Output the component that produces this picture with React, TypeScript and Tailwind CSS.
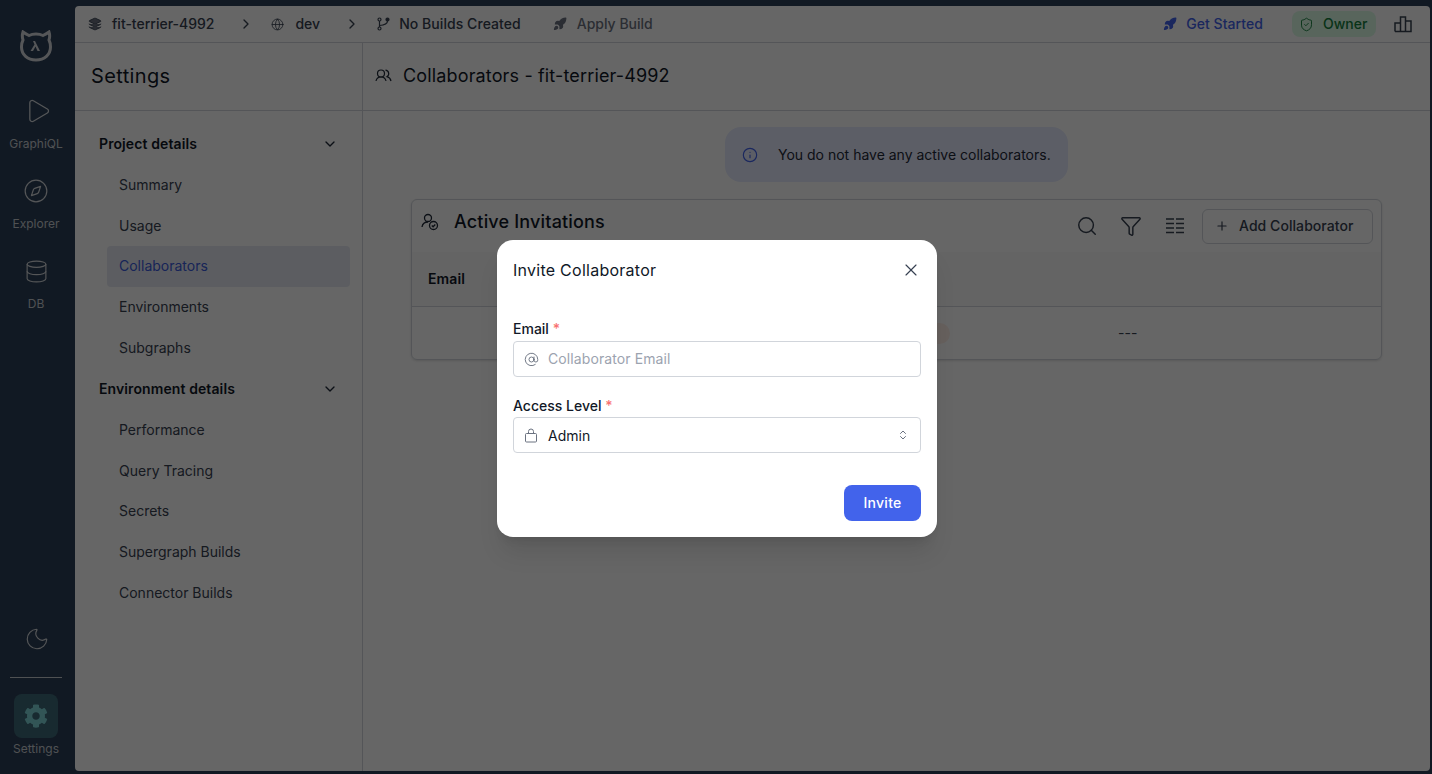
import { AtSign, ChevronDown, ChevronRight, ChevronsUpDown, Compass, Database, Filter, Globe, Info, Layers, Moon, Play, Plus, Rocket, Search, ShieldCheck, X } from "lucide-react";
import { FaCog } from "react-icons/fa";

const projectLinks = ["Summary", "Usage", "Collaborators", "Environments", "Subgraphs"];
const environmentLinks = ["Performance", "Query Tracing", "Secrets", "Supergraph Builds", "Connector Builds"];

const RailItem = ({ label, children }: { label: string; children: React.ReactNode }) => (
  <div className="flex h-[80px] flex-col items-center pt-[3px]">
    <div className="flex h-[34px] items-center justify-center text-[#d4d8dc]">{children}</div>
    <span className="mt-[8px] text-xs leading-4 text-[#c6cad0]">{label}</span>
  </div>
);

const Logo = () => (
  <svg width="32" height="32" viewBox="0 0 32 32" fill="none">
    <path d="M3 2c-1 3-1 5 0 8-1 2-1.500 4-1.500 7 0 7.500 6 13 14.500 13s14.500-5.500 14.500-13c0-3-.5-5-1.500-7 1-3 1-5 0-8-2 1.500-4 2.500-6 3.500-2-1-4-1.500-7-1.500s-5 .5-7 1.500C7 4.500 5 3.500 3 2z" stroke="#d4d8dc" strokeWidth="3" />
    <path d="M13 11h2l5 10h-2.500l-2-4.500L13 21h-2.500l4-6.500z" fill="#d4d8dc" />
  </svg>
);

const PeopleIcon = () => (
  <svg width="17" height="17" viewBox="0 0 17 17" fill="none" stroke="currentColor" strokeWidth="1.200" className="text-[#1f2937]">
    <circle cx="6" cy="6.500" r="3.500" />
    <path d="M1 14c.5-2.500 2-4 5-4s4.500 1.500 5 4M10.500 3.200a3.500 3.500 0 0 1 1.500 6.500c2 .5 3.500 2 4 4.300" />
  </svg>
);

const InviteIcon = () => (
  <svg width="18" height="18" viewBox="0 0 18 18" fill="none" stroke="currentColor" strokeWidth="1.300" className="mt-[13px] text-[#1f2937]">
    <circle cx="7" cy="5" r="3.500" />
    <path d="M1 14c.5-3 2.500-5 6-5" />
    <circle cx="12.500" cy="12.500" r="4" />
    <path d="M10.800 12.500l1.300 1.300 2.200-2.300" />
  </svg>
);

const BranchIcon = () => (
  <svg width="13" height="14" viewBox="0 0 13 14" fill="none" stroke="#374151" strokeWidth="1.200" className="ml-[17px]">
    <circle cx="2.500" cy="2.500" r="1.500" />
    <circle cx="2.500" cy="11.500" r="1.500" />
    <circle cx="10.500" cy="2.500" r="1.500" fill="#374151" />
    <path d="M2.500 4v6M10.500 4c0 3-3 4-8 4.500" />
  </svg>
);

const BagLock = () => (
  <svg width="14" height="15" viewBox="0 0 14 15" fill="none" stroke="#6b7280" strokeWidth="1">
    <rect x="1.500" y="5.500" width="11" height="8.500" rx="1" />
    <path d="M4.500 5.500V3.500a2.500 2.500 0 0 1 5 0v2" />
  </svg>
);

const NavGroup = ({ title, links }: { title: string; links: string[] }) => (
  <div>
    <div className="flex h-[40.75px] items-center justify-between pl-[24px] pr-[24px]">
      <span className="text-sm font-semibold tracking-[0.1px] text-[#111827]">{title}</span>
      <ChevronDown size={16} className="text-[#1f2937]" />
    </div>
    {links.map((link) => (
      <div
        key={link}
        className={`ml-[32px] mr-[12px] flex h-[40.75px] items-center rounded pl-[12px] text-sm ${
          link === "Collaborators" ? "bg-[#e6e9f2] text-[#3b5bdb]" : "text-[#374151]"
        }`}
      >
        {link}
      </div>
    ))}
  </div>
);

const Field = ({ label, labelGap, children }: { label: string; labelGap: string; children: React.ReactNode }) => (
  <div>
    <div className={`${labelGap} text-sm font-medium leading-5 text-[#111827]`}>
      {label} <span className="text-[#f87171]">*</span>
    </div>
    <div className="flex h-[36px] items-center rounded border border-[#d1d5db] bg-white pl-[10px] pr-[11px] text-sm">
      {children}
    </div>
  </div>
);

export default function App() {
  return (
    <div className="relative flex h-[774px] w-[1432px] overflow-hidden bg-[#2c3f57] font-['Inter',sans-serif]">
      {/* left rail */}
      <aside className="flex w-[75px] flex-col items-center pr-[3px] pt-[30px]">
        <div className="mb-[29px] flex h-[32px] items-center justify-center">
          <Logo />
        </div>
        <div className="w-full">
          <RailItem label="GraphiQL">
            <Play size={28} strokeWidth={1.1} className="ml-[3px]" />
          </RailItem>
          <RailItem label="Explorer">
            <Compass size={26} strokeWidth={1.1} />
          </RailItem>
          <RailItem label="DB">
            <Database size={25} strokeWidth={1.1} />
          </RailItem>
        </div>
        <div className="mt-auto flex w-full flex-col items-center pb-[17px]">
          <Moon size={26} strokeWidth={1.1} className="ml-[2px] text-[#d4d8dc]" />
          <div className="mb-[16px] mt-[25px] h-px w-[52px] bg-[#c6cad0]" />
          <div className="flex h-[44px] w-[44px] items-center justify-center rounded-lg bg-[#3e6a78]">
            <FaCog size={24} className="text-[#7dd4d8]" />
          </div>
          <span className="mt-[3px] text-xs leading-4 text-[#c6cad0]">Settings</span>
        </div>
      </aside>

      {/* main panel */}
      <div className="mb-[3px] mr-[2px] mt-[6px] flex min-w-0 flex-1 flex-col rounded-sm bg-white">
        <header className="flex h-[37px] items-center border-b border-[#d1d5db] pl-[13px] pr-[18px] text-sm text-[#374151]">
          <Layers size={14} strokeWidth={1.5} className="fill-[#6b7280]" />
          <span className="ml-[10px] font-medium">fit-terrier-4992</span>
          <ChevronRight size={16} className="ml-[24px]" />
          <Globe size={13} strokeWidth={1.5} className="ml-[17px]" />
          <span className="ml-[11px] font-medium">dev</span>
          <ChevronRight size={16} className="ml-[24px]" />
          <BranchIcon />
          <span className="ml-[9px] font-medium tracking-[0.06px]">No Builds Created</span>
          <Rocket size={14} className="ml-[32px] fill-[#6b7280] text-[#6b7280]" />
          <span className="ml-[10px] font-medium text-[#6b7280]">Apply Build</span>
          <Rocket size={14} className="ml-auto fill-[#4263eb] text-[#4263eb]" />
          <span className="ml-[9px] font-medium tracking-[0.06px] text-[#4263eb]">Get Started</span>
          <div className="ml-[29px] flex h-[26px] w-[84px] items-center rounded-lg bg-[#dcfce7] pl-[7px] text-[#15803d]">
            <ShieldCheck size={15} strokeWidth={1.5} />
            <span className="ml-[9px] font-medium">Owner</span>
          </div>
          <svg className="ml-[18px] text-[#374151]" width="18" height="18" viewBox="0 0 18 18" fill="none" stroke="currentColor" strokeWidth="1.500">
            <path d="M1 16.500V8h5.500v8.500M6.500 16.500V2h5v14.500M11.500 16.500V6H17v10.500zM1 16.500h16" />
          </svg>
        </header>

        <div className="flex min-h-0 flex-1">
          {/* settings nav */}
          <nav className="w-[288px] shrink-0 border-r border-[#d1d5db]">
            <div className="flex h-[68px] items-center border-b border-[#d1d5db] pb-[2px] pl-[16px] text-xl tracking-[0.37px] text-[#111827]">Settings</div>
            <div className="pt-[12.700px]">
              <NavGroup title="Project details" links={projectLinks} />
              <div className="mt-[0.500px]">
                <NavGroup title="Environment details" links={environmentLinks} />
              </div>
            </div>
          </nav>

          {/* content */}
          <main className="min-w-0 flex-1">
            <div className="flex h-[68px] items-center border-b border-[#d1d5db] pb-[2px] pl-[12px] text-lg tracking-[0.15px] text-[#111827]">
              <PeopleIcon />
              <span className="ml-[11px]">Collaborators - fit-terrier-4992</span>
            </div>
            <div className="px-[48px] pt-[16px]">
              <div className="mx-auto flex h-[55px] w-[343px] items-center rounded-2xl bg-[#e6ebff] pl-[17px] text-sm text-[#1f2937]">
                <Info size={16} strokeWidth={1.75} className="text-[#4263eb]" />
                <span className="ml-[20px]">You do not have any active collaborators.</span>
              </div>
              <section className="mt-[17px] overflow-hidden rounded-md border border-[#d1d5db] shadow">
                <div className="flex h-[52px] items-start pl-[9px] pr-[8px]">
                  <InviteIcon />
                  <span className="ml-[15px] mt-[8px] text-lg font-medium tracking-[0.17px] text-[#111827]">Active Invitations</span>
                  <div className="ml-auto mt-[9px] flex items-center text-[#374151]">
                    <Search size={22} strokeWidth={1.6} className="-mt-[2px]" />
                    <Filter size={22} strokeWidth={1.6} className="-mt-[2px] ml-[22px]" />
                    <svg className="-mt-[2px] ml-[22px]" width="22" height="22" viewBox="0 0 22 22" fill="none" stroke="currentColor" strokeWidth="1.600">
                      <path d="M2 4h8M12 4h8M2 8.500h8M12 8.500h8M2 13h8M12 13h8M2 17.500h8M12 17.500h8" />
                    </svg>
                    <div className="ml-[16px] flex h-[35px] w-[171px] items-center rounded-md border border-[#d1d5db] pb-[1px] pl-[12px] text-sm font-medium tracking-[0.06px] text-[#374151]">
                      <Plus size={14} />
                      <span className="ml-[10px]">Add Collaborator</span>
                    </div>
                  </div>
                </div>
                <div className="flex h-[55px] items-center border-b border-[#d1d5db] bg-[#f9fafb] pl-[16px] text-sm font-semibold tracking-[0.1px] text-[#111827]">Email</div>
                <div className="flex h-[52px] items-center pl-[500px] text-sm text-[#374151]">
                  <span className="h-[21px] w-[38px] rounded-full bg-[#fff0e8]" />
                  <span className="ml-[168px]">---</span>
                </div>
              </section>
            </div>
          </main>
        </div>
      </div>

      {/* invite dialog */}
      <div className="absolute inset-0 flex items-center justify-center bg-black/60">
        <div className="ml-[2px] mt-[3px] h-[297px] w-[440px] rounded-2xl bg-white px-[16px] pt-[20px] shadow-xl">
          <div className="flex h-[20px] items-center justify-between text-base tracking-[0.26px] text-[#111827]">
            <span>Invite Collaborator</span>
            <X size={20} strokeWidth={1.4} className="text-[#374151]" />
          </div>
          <div className="mt-[39px] flex flex-col gap-[19px]">
            <Field label="Email" labelGap="mb-[2px]">
              <AtSign size={15} strokeWidth={1.5} className="text-[#6b7280]" />
              <span className="ml-[9px] tracking-[0.1px] text-[#9ca3af]">Collaborator Email</span>
            </Field>
            <Field label="Access Level" labelGap="mb-[1px]">
              <BagLock />
              <span className="ml-[10px] pt-[2px] text-[#111827]">Admin</span>
              <ChevronsUpDown size={12} className="ml-auto text-[#6b7280]" />
            </Field>
          </div>
          <div className="mt-[32px] flex justify-end">
            <button className="h-[36px] w-[77px] rounded-lg bg-[#4263eb] text-sm font-medium tracking-[0.3px] text-white">Invite</button>
          </div>
        </div>
      </div>
    </div>
  );
}
